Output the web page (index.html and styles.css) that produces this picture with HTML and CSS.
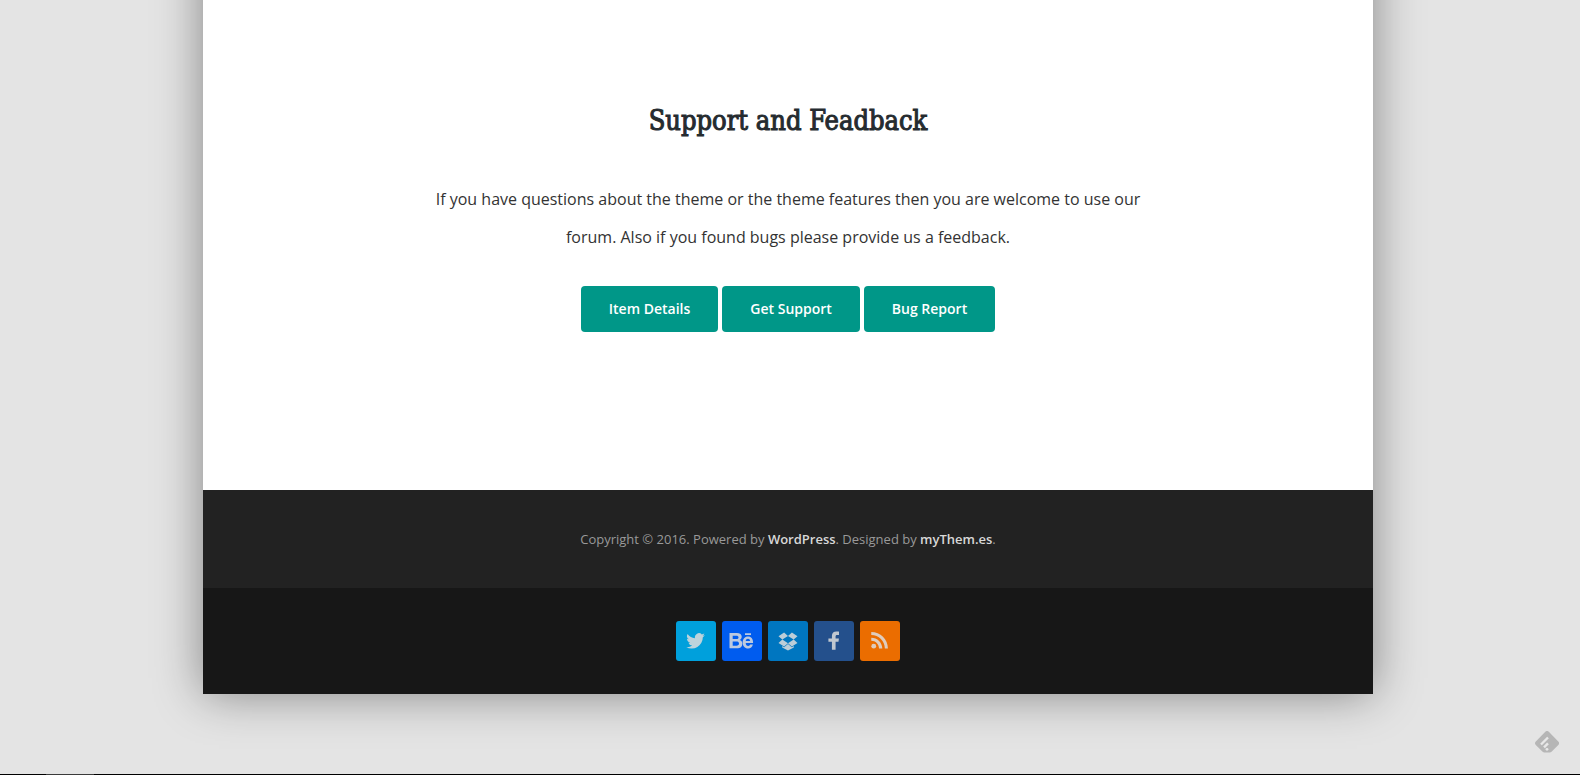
FILE: index.html
```html
<!DOCTYPE html>
<html lang="en">
<head>
    <meta charset="UTF-8">
    <meta name="viewport" content="width=device-width, initial-scale=1.0">
    <title>Support and Feadback</title>
    <link rel="stylesheet" href="styles.css">
</head>
<body>
    <div class="wrapper">
        <main class="support">
            <h2 class="support-title">Support and Feadback</h2>
            <p class="support-text">If you have questions about the theme or the theme features then you are welcome to use our forum. Also if you found bugs please provide us a feedback.</p>
            <div class="support-buttons">
                <a href="#" class="btn">Item Details</a>
                <a href="#" class="btn">Get Support</a>
                <a href="#" class="btn">Bug Report</a>
            </div>
        </main>

        <footer>
            <div class="copyright">
                <p>Copyright © 2016. Powered by <a href="#">WordPress</a>. Designed by <a href="#">myThem.es</a>.</p>
            </div>
            <nav class="social" aria-label="Social">
                <a href="#" class="social-link twitter" aria-label="Twitter">
                    <svg viewBox="0 0 24 24"><path d="M22.600 4.900a9.500 9.500 0 0 1-2.700.8 4.800 4.800 0 0 0 2.100-2.700 9.500 9.500 0 0 1-3 1.200 4.800 4.800 0 0 0-8.200 4.400A13.600 13.600 0 0 1 1.900 3.500a4.800 4.800 0 0 0 1.500 6.400 4.700 4.700 0 0 1-2.200-.6c0 2.300 1.600 4.300 3.800 4.800a4.800 4.800 0 0 1-2.100.1 4.800 4.800 0 0 0 4.500 3.300A9.600 9.600 0 0 1 .3 19.500a13.600 13.600 0 0 0 19.900-12.100 9.700 9.700 0 0 0 2.400-2.500z"/></svg>
                </a>
                <a href="#" class="social-link behance" aria-label="Behance">
                    <svg viewBox="0 0 26 18"><path fill-rule="evenodd" d="M.5 1h7.200c3.400 0 5 1.300 5 3.800 0 1.600-.8 2.600-2.100 3.200 1.800.5 2.700 1.800 2.700 3.500 0 3.300-2 4.800-5.400 4.800H.5zM3.700 3.700v3.400h3.500c1.500 0 2.300-.6 2.300-1.700 0-1.200-.8-1.700-2.300-1.700zM3.700 9.500v4.200h3.700c1.700 0 2.600-.6 2.600-2.100s-.9-2.100-2.600-2.100zM16 1.300h6v1.600h-6zM19 4.400c3.400 0 5.200 2.500 5.100 6.600h-7.400c.1 1.900 1 2.900 2.500 2.900 1.100 0 1.700-.5 2-1.300h2.700c-.7 2.600-2.300 3.900-4.800 3.900-3.400 0-5.400-2.400-5.400-6s2.100-6.100 5.300-6.100zM16.700 9h4.400c-.2-1.500-.9-2.200-2.100-2.200s-2.100.8-2.300 2.200z"/></svg>
                </a>
                <a href="#" class="social-link dropbox" aria-label="Dropbox">
                    <svg viewBox="0 0 24 24"><path d="M7.300 1.800L12 6 5.200 10.300.6 6.300zM16.700 1.800l6.700 4.500-4.600 4L12 6zM.6 14.300l4.600-4L12 14.700l-4.700 4zM23.400 14.300l-4.600-4L12 14.700l4.700 4zM12 15.600l4.700 4 2.300-1.500v1.600L12 23.500l-7-3.800v-1.600l2.300 1.500z"/></svg>
                </a>
                <a href="#" class="social-link facebook" aria-label="Facebook">
                    <svg viewBox="0 0 24 24"><path d="M18 .8v4h-2.200c-1.500 0-1.900.7-1.900 1.800v2.300h4l-.5 3.900h-3.500v9.800H9.500v-9.800H5.300V8.900h4.200V5.800c0-3.400 2.100-5.200 5.400-5.200 1.400 0 2.700.1 3.100.2z"/></svg>
                </a>
                <a href="#" class="social-link rss" aria-label="RSS">
                    <svg viewBox="0 0 24 24"><circle cx="4.500" cy="18.200" r="2.900"/><path d="M1.500 1.200v3.600c9 0 16.300 7.300 16.300 16.300h3.700C21.500 10 12.500 1.200 1.500 1.200zM1.500 8v3.800c5.200 0 9.300 4.100 9.300 9.300h4C14.800 13.900 8.800 8 1.500 8z"/></svg>
                </a>
            </nav>
        </footer>
    </div>

    <button class="feed-badge" aria-label="Follow feed">
        <svg viewBox="0 0 24 22"><path fill="#b6b6b6" d="M10.300.8a2.500 2.500 0 0 1 3.500 0l9.500 9.600a2.500 2.500 0 0 1 0 3.500l-6.800 6.900a2.500 2.500 0 0 1-1.800.8H9.400a2.500 2.500 0 0 1-1.800-.8L.8 13.900a2.500 2.500 0 0 1 0-3.500z"/><path stroke="#e8e8e8" stroke-width="2.400" d="M6 13.500l7-7M9 16.300l4-4"/><circle cx="12" cy="18.300" r="1.400" fill="#e8e8e8"/></svg>
    </button>

    <div class="bottom-bar"><span></span></div>
</body>
</html>
```
FILE: styles.css
```css
* {
    margin: 0;
    padding: 0;
    box-sizing: border-box;
}

body {
    font-family: "Open Sans", sans-serif;
    background: #e4e4e4;
    color: #252b2f;
    padding: 0 4px 80px 0;
}

.wrapper {
    max-width: 1170px;
    margin: -60px auto 0;
    background: #fff;
    box-shadow: 0 0 45px rgba(0, 0, 0, 0.42);
}

.support {
    padding: 161px 15px 158px;
    text-align: center;
}

.support-title {
    font-family: "DejaVu Serif Condensed", "DejaVu Serif", serif;
    font-size: 27px;
    font-weight: 400;
    line-height: 40px;
    margin-bottom: 39px;
    -webkit-text-stroke: 1px #252b2f;
}

.support-text {
    max-width: 750px;
    margin: 0 auto 30px;
    color: #333;
    font-size: 16px;
    line-height: 38px;
}

.support-buttons {
    display: flex;
    flex-wrap: wrap;
    justify-content: center;
    gap: 4px;
}

.btn {
    padding: 13px 28px;
    border-radius: 4px;
    background: #009788;
    color: #fff;
    font-size: 14px;
    font-weight: 600;
    line-height: 20px;
    text-decoration: none;
}

.btn:hover {
    background: #00796b;
}

.copyright {
    padding: 39px 15px;
    background: #222;
    color: #999;
    font-size: 13px;
    line-height: 20px;
    text-align: center;
}

.copyright a {
    color: #d8d8d8;
    font-weight: 600;
    text-decoration: none;
}

.social {
    display: flex;
    justify-content: center;
    gap: 6px;
    padding: 33px 15px;
    background: #171717;
}

.social-link {
    display: flex;
    align-items: center;
    justify-content: center;
    width: 40px;
    height: 40px;
    border-radius: 3px;
}

.social-link svg {
    width: 20px;
    height: 20px;
    fill: #ddd;
    opacity: 0.85;
}

.social-link.behance svg {
    width: 26px;
}

.twitter {
    background: #00a0dc;
}

.behance {
    background: #005cef;
}

.dropbox {
    background: #0076c0;
}

.facebook {
    background: #24508c;
}

.rss {
    background: #eb6d00;
}

.feed-badge {
    position: fixed;
    right: 21px;
    bottom: 22px;
    width: 24px;
    height: 22px;
    border: none;
    background: none;
    cursor: pointer;
}

.feed-badge svg {
    display: block;
    fill: none;
}

.bottom-bar {
    position: fixed;
    left: 0;
    right: 0;
    bottom: 0;
    height: 1px;
    padding-left: 46px;
    background: #000;
}

.bottom-bar span {
    display: block;
    width: 48px;
    height: 1px;
    background: #3a3a3a;
}
```
